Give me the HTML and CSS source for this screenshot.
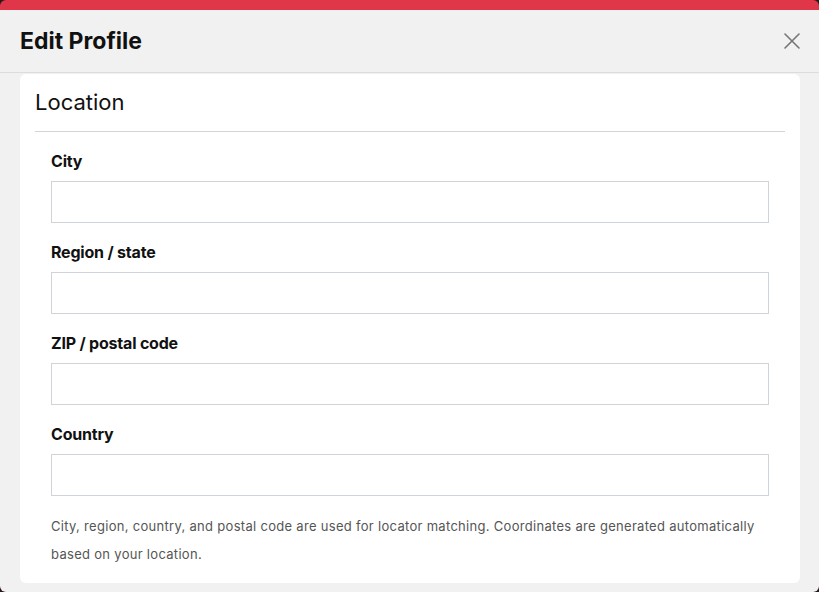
FILE: index.html
```html
<!DOCTYPE html>
<html lang="en">
<head>
<meta charset="utf-8">
<title>Edit Profile</title>
<link rel="stylesheet" href="styles.css">
</head>
<body>
<div class="modal">
  <header class="modal-header">
    <h1 class="modal-title">Edit Profile</h1>
    <button class="close-btn" aria-label="Close">
      <svg width="16" height="16" viewBox="0 0 16 16"><path d="M1 1 L15 15 M15 1 L1 15" stroke="#767676" stroke-width="1.6" fill="none" stroke-linecap="round"/></svg>
    </button>
  </header>
  <div class="modal-body">
    <section class="card">
      <h2 class="card-title">Location</h2>
      <form class="form">
        <div class="field">
          <label class="field-label">City</label>
          <input class="field-input" type="text">
        </div>
        <div class="field">
          <label class="field-label">Region / state</label>
          <input class="field-input" type="text">
        </div>
        <div class="field">
          <label class="field-label">ZIP / postal code</label>
          <input class="field-input" type="text">
        </div>
        <div class="field">
          <label class="field-label">Country</label>
          <input class="field-input" type="text">
        </div>
        <p class="help">City, region, country, and postal code are used for locator matching. Coordinates are generated automatically based on your location.</p>
      </form>
    </section>
  </div>
</div>
</body>
</html>
```
FILE: styles.css
```css
html, body {
  margin: 0;
  padding: 0;
  background: #2a1a1c;
}
body {
  font-family: Inter, "Noto Sans", "Liberation Sans", sans-serif;
  color: #111;
}
.modal {
  width: 819px;
  height: 592px;
  box-sizing: border-box;
  background: #f1f1f1;
  border-top: 10px solid #e0364a;
  border-radius: 6px;
  display: flex;
  flex-direction: column;
  overflow: hidden;
}
.modal-header {
  height: 63px;
  box-sizing: border-box;
  border-bottom: 1px solid #dcdcdc;
  display: flex;
  align-items: center;
  justify-content: space-between;
  padding: 0 19px 0 20px;
}
.modal-title {
  margin: 0;
  font-size: 23px;
  font-weight: 700;
  letter-spacing: 0;
  line-height: 28px;
  color: #111;
}
.close-btn {
  border: 0;
  background: none;
  padding: 0;
  width: 16px;
  height: 16px;
  display: flex;
}
.modal-body {
  padding: 1px 19px 0 20px;
}
.card {
  background: #fff;
  border-radius: 6px;
  padding: 0 15px 15px;
  height: 509px;
  box-sizing: border-box;
}
.card-title {
  margin: 0;
  padding: 14px 0 15px;
  font-size: 22px;
  font-weight: 400;
  line-height: 28px;
  letter-spacing: 0;
  border-bottom: 1px solid #d4d4d4;
  color: #111;
}
.form {
  padding: 0 16px;
}
.field {
  display: flex;
  flex-direction: column;
  gap: 10px;
  padding-top: 19px;
}
.field-label {
  font-size: 16px;
  font-weight: 700;
  line-height: 20px;
  letter-spacing: -0.2px;
  color: #111;
}
.field-input {
  height: 42px;
  box-sizing: border-box;
  border: 1px solid #cfd3da;
  border-radius: 0;
  background: #fff;
  margin: 0;
}
.help {
  margin: 16px 0 0;
  font-size: 13px;
  line-height: 28px;
  letter-spacing: 0.3px;
  color: #555;
}
```
